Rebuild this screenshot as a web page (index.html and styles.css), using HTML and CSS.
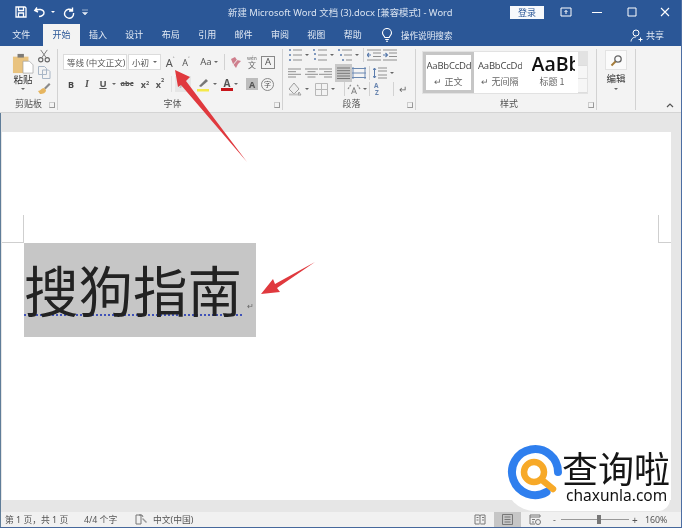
FILE: index.html
```html
<!DOCTYPE html>
<html lang="zh-CN">
<head>
<meta charset="utf-8">
<title>Word</title>
<link rel="stylesheet" href="styles.css">
</head>
<body>
<div class="window">
  <header class="titlebar">
    <div class="qat">
      <svg class="qi" width="14" height="14" viewBox="0 0 14 14"><path d="M2 2h9l1 1v9H2zM4.500 2v3.500h5V2M4.500 12V8h5v4" fill="none" stroke="#fff" stroke-width="1.300"/></svg>
      <svg class="qi" width="14" height="14" viewBox="0 0 14 14"><path d="M4 2.500 1.800 5.500 5 7M2.200 5.300C5 4 10.500 3.800 11 7.500 11.300 10 8.500 11.500 6 11.500" fill="none" stroke="#fff" stroke-width="1.400"/></svg>
      <i class="dot"></i>
      <svg class="qi redo" width="14" height="14" viewBox="0 0 14 14"><path d="M10.500 2.500v3.500H7M10.200 5.500A4.500 4.500 0 1 0 11.500 8" fill="none" stroke="#fff" stroke-width="1.400"/></svg>
      <svg class="qi more" width="8" height="8" viewBox="0 0 8 8"><path d="M1 2h6M1.500 4.500h5L4 7z" fill="#dfe7f3" stroke="#dfe7f3" stroke-width=".6"/></svg>
    </div>
    <div class="doctitle">新建 Microsoft Word 文档 (3).docx [兼容模式] - Word</div>
    <button class="login">登录</button>
    <div class="winctl">
      <svg width="12" height="10" viewBox="0 0 12 10"><path d="M1 1h10v8H1zM6 7V3.500M4.500 5 6 3.500 7.500 5" fill="none" stroke="#fff"/></svg>
      <svg class="wc2" width="10" height="10" viewBox="0 0 10 10"><path d="M0 5.500h10" stroke="#fff"/></svg>
      <svg class="wc3" width="10" height="10" viewBox="0 0 10 10"><path d="M1 1h8v8H1z" fill="none" stroke="#fff"/></svg>
      <svg class="wc4" width="10" height="10" viewBox="0 0 10 10"><path d="M1 1l8 8M9 1 1 9" stroke="#fff" stroke-width="1.100"/></svg>
    </div>
  </header>

  <nav class="tabs">
    <span class="tab first">文件</span>
    <span class="tab active">开始</span>
    <span class="tab">插入</span>
    <span class="tab">设计</span>
    <span class="tab">布局</span>
    <span class="tab">引用</span>
    <span class="tab">邮件</span>
    <span class="tab">审阅</span>
    <span class="tab">视图</span>
    <span class="tab">帮助</span>
    <svg class="bulb" width="12" height="14" viewBox="0 0 12 14"><path d="M3.800 9.500C3.500 8 1.500 7 1.500 5a4.500 4.500 0 0 1 9 0c0 2-2 3-2.300 4.500zM4.200 11.500h3.600M5 13.300h2" fill="none" stroke="#fff" stroke-width="1.100"/></svg>
    <span class="search">操作说明搜索</span>
    <span class="share">
      <svg width="13" height="13" viewBox="0 0 13 13"><circle cx="6" cy="4" r="3" fill="none" stroke="#fff"/><path d="M1 12.500C1.500 9 4 8 6 8M8.500 10.500h4M10.500 8.500v4" fill="none" stroke="#fff"/></svg>
      共享
    </span>
  </nav>

  <section class="ribbon">
    <div class="group g-clip">
      <div class="gbody clipbody">
        <div class="paste">
          <svg width="22" height="21" viewBox="0 0 24 23"><path d="M1 4h17v18H1z" fill="#e9c37f"/><path d="M6 1h7v4H6z" fill="#7d7a75"/><path d="M12 9h7l4 4v9H12z" fill="#fff" stroke="#9a9a9a" stroke-width=".7"/></svg>
          <span class="pastelabel">粘贴</span>
          <i class="caret"></i>
        </div>
        <div class="clipsmall">
          <svg width="14" height="14" viewBox="0 0 14 15"><circle cx="3.500" cy="11.500" r="2.300" fill="none" stroke="#666" stroke-width="1.200"/><circle cx="10.500" cy="11.500" r="2.300" fill="none" stroke="#666" stroke-width="1.200"/><path d="M4.500 9.500 10.500 1M9.500 9.500 3.500 1" stroke="#777"/></svg>
          <svg width="14" height="14" viewBox="0 0 14 14"><path d="M1.500 1.500h6l2 2v6h-8zM5.500 5h6l1.500 1.500v7h-7.500z" fill="#f3f3f3" stroke="#a8b6c6"/></svg>
          <svg width="14" height="14" viewBox="0 0 14 14"><path d="M7 7l5-5 1.500 1.500-5 5z" fill="#8a8a8a"/><path d="M1 10c3 0 3-3 6-3l2 2c0 3-3 4-6 4z" fill="#e6b55f"/></svg>
        </div>
      </div>
      <div class="glabel"><span></span><span>剪贴板</span><i class="launcher"></i></div>
    </div>

    <div class="group g-font">
      <div class="gbody rows">
        <div class="row">
          <span class="combo fontname">等线 (中文正文)<i class="caret"></i></span>
          <span class="combo fontsize">小初<i class="caret"></i></span>
          <span class="tool w16 big">A<sup>˄</sup></span>
          <span class="tool w16 mid">A<sup>˅</sup></span>
          <span class="tool aa">Aa<i class="caret"></i></span>
          <i class="vsep"></i>
          <svg class="tool w16" width="16" height="16" viewBox="0 0 16 16"><path d="M3 5l4-2 2 3 4 1-3 3-2 4-3-4z" fill="#cf7f8d"/><path d="M4 12l6-7" stroke="#eee"/></svg>
          <span class="tool w16 pinyin"><small>wén</small>文</span>
          <span class="tool w16 boxa">A</span>
        </div>
        <div class="row r2">
          <span class="tool w16 bold">B</span>
          <span class="tool w16 ital">I</span>
          <span class="tool w16 under">U</span><i class="caret c8"></i>
          <span class="tool w16 strike">abc</span>
          <span class="tool w16 xs">x<sub>2</sub></span>
          <span class="tool w14 xs">x<sup>2</sup></span>
          <i class="vsep v2"></i>
          <span class="tool w16 fade">A</span>
          <svg class="tool hl" width="16" height="16" viewBox="0 0 16 16"><path d="M3 10l7-7 2 2-7 6z" fill="#777"/><path d="M1 13h12v2.500H1z" fill="#f4e94a"/></svg><i class="caret c8"></i>
          <span class="tool w16 redA">A</span><i class="caret c8"></i>
          <span class="tool w16 shadeA">A</span>
          <span class="tool w16 circ">字</span>
        </div>
      </div>
      <div class="glabel"><span></span><span>字体</span><i class="launcher"></i></div>
    </div>

    <div class="group g-para">
      <div class="gbody rows para">
        <div class="row pr1">
          <svg class="pi" width="14" height="12" viewBox="0 0 14 12"><path d="M1 1h2M1 6h2M1 11h2" stroke="#345f9c" stroke-width="1.500"/><path d="M5 1h9M5 6h9M5 11h9" stroke="#777"/></svg><i class="caret cp"></i>
          <svg class="pi" width="14" height="12" viewBox="0 0 14 12"><path d="M1 0v2M1 5h2M1 10h2" stroke="#345f9c" stroke-width="1.500"/><path d="M5 1h9M5 6h9M5 11h9" stroke="#777"/></svg><i class="caret cp"></i>
          <svg class="pi" width="14" height="12" viewBox="0 0 14 12"><path d="M0 1h2M2 6h2M4 11h2" stroke="#345f9c" stroke-width="1.500"/><path d="M4 1h10M6 6h8M8 11h6" stroke="#777"/></svg><i class="caret cp"></i>
          <i class="vsep v3"></i>
          <svg class="pi" width="14" height="12" viewBox="0 0 14 12"><path d="M0 1h14M6 4h8M6 7.500h8M0 11h14" stroke="#777"/><path d="M0 6h4M2 4 0 6l2 2" fill="none" stroke="#345f9c" stroke-width="1.200"/></svg>
          <svg class="pi ind" width="14" height="12" viewBox="0 0 14 12"><path d="M0 1h14M6 4h8M6 7.500h8M0 11h14" stroke="#777"/><path d="M0 6h4M2.500 4l2 2-2 2" fill="none" stroke="#345f9c" stroke-width="1.200"/></svg>
        </div>
        <div class="row pr2">
          <svg class="pi" width="13" height="10" viewBox="0 0 13 10"><path d="M0 1h13M0 3.700h8M0 6.300h13M0 9h8" stroke="#777"/></svg>
          <svg class="pi a2" width="13" height="10" viewBox="0 0 13 10"><path d="M0 1h13M2.500 3.700h8M0 6.300h13M2.500 9h8" stroke="#777"/></svg>
          <svg class="pi a3" width="13" height="10" viewBox="0 0 13 10"><path d="M0 1h13M5 3.700h8M0 6.300h13M5 9h8" stroke="#777"/></svg>
          <span class="just"><svg width="13" height="12" viewBox="0 0 13 12"><path d="M0 1h13M0 3.700h13M0 6.300h13M0 9h13M0 11.500h13" stroke="#777"/></svg></span>
          <svg class="pi dist" width="14" height="12" viewBox="0 0 14 12"><path d="M0 1.500h14M0 6h14M0 10.500h14M1 0v12M13 0v12" stroke="#4a6fa3"/></svg>
          <i class="vsep v4"></i>
          <svg class="pi sp" width="14" height="12" viewBox="0 0 14 12"><path d="M5 1h9M5 4h9M5 8h9M5 11h9" stroke="#777"/><path d="M1.500 1v10M0 3l1.500-2L3 3M0 9l1.500 2L3 9" fill="none" stroke="#345f9c"/></svg><i class="caret cp"></i>
        </div>
        <div class="row pr3">
          <svg class="pi" width="14" height="14" viewBox="0 0 14 14"><path d="M6 1 1 7l5 5 5-5zM11 10l2 3h-3z" fill="#eee" stroke="#888"/><path d="M1 12.500h9" stroke="#bbb" stroke-width="2"/></svg><i class="caret cp c1"></i>
          <svg class="pi" width="13" height="13" viewBox="0 0 13 13"><path d="M.5.500h12v12H.5zM6.500 1v11M1 6.500h11" fill="none" stroke="#aaa"/></svg><i class="caret cp c2"></i>
          <i class="vsep v5"></i>
          <svg class="pi cn" width="14" height="12" viewBox="0 0 14 12"><path d="M4.500 11 7 4.500 9.500 11M5.500 9h3" fill="none" stroke="#666"/><path d="M1 6 4 1.500M13 6 10 1.500" stroke="#777" stroke-width="1.300" stroke-dasharray="2 1"/></svg><i class="caret cp c3"></i>
          <i class="vsep v6"></i>
          <span class="sort"><b>A</b><b class="z">Z</b></span>
          <i class="vsep v7"></i>
          <span class="mark">↵</span>
        </div>
      </div>
      <div class="glabel"><span></span><span>段落</span><i class="launcher"></i></div>
    </div>

    <div class="group g-style">
      <div class="gbody">
        <div class="gallery">
          <div class="style sel"><span class="sample">AaBbCcDd</span><span class="sname">↵ 正文</span></div>
          <div class="style"><span class="sample">AaBbCcDd</span><span class="sname">↵ 无间隔</span></div>
          <div class="style h1"><span class="sample">AaBb</span><span class="sname">标题 1</span></div>
          <div class="gscroll"><i></i><i></i><i></i></div>
        </div>
      </div>
      <div class="glabel"><span></span><span>样式</span><i class="launcher"></i></div>
    </div>

    <div class="group g-edit">
      <span class="editbtn"><svg width="13" height="13" viewBox="0 0 13 13"><circle cx="8" cy="5" r="3.200" fill="none" stroke="#666" stroke-width="1.300"/><path d="M5.500 7.500 1.500 11.500" stroke="#a57c3a" stroke-width="2"/></svg></span>
      <span class="editlabel">编辑</span>
      <i class="caret"></i>
    </div>

    <div class="collapse"><svg width="8" height="5" viewBox="0 0 8 5"><path d="M1 4l3-3 3 3" fill="none" stroke="#555" stroke-width="1.200"/></svg></div>
  </section>

  <main class="workspace">
    <div class="page">
      <div class="marks"><i class="mark-l"></i><i class="mark-r"></i></div>
      <div class="selection"><span class="doc">搜狗指南</span><span class="para-mark">↵</span></div>
    </div>
  </main>

  <footer class="status">
    <span class="s1">第 1 页，共 1 页</span>
    <span class="s2">4/4 个字</span>
    <svg class="s3" width="13" height="11" viewBox="0 0 13 11"><path d="M1 1h5v9H1zM4 1h3l1 2" fill="none" stroke="#777"/><path d="M8 4l4 4-1 1-4-4z" fill="#999"/></svg>
    <span class="s4">中文(中国)</span>
    <span class="sright">
      <svg width="12" height="11" viewBox="0 0 12 11"><path d="M1 1h4.500l.5 1 .5-1H11v9H6.500L6 9.500 5.500 10H1zM6 2v7M2.500 3.500h2M2.500 6h2M8 3.500h2M8 6h2" fill="none" stroke="#777"/></svg>
      <span class="viewon"><svg width="11" height="11" viewBox="0 0 11 11"><path d="M.5.500h10v10H.5zM2.500 3h6M2.500 5.500h6M2.500 8h6" fill="none" stroke="#777"/></svg></span>
      <svg class="webv" width="12" height="11" viewBox="0 0 12 11"><path d="M1 1h10v2H1zM1 3v7h5M3 5.500h3M3 8h2" fill="none" stroke="#777"/><circle cx="9" cy="8" r="2.500" fill="none" stroke="#777"/></svg>
      <span class="zminus">-</span>
      <span class="slider"><i></i></span>
      <span class="zplus">+</span>
      <span class="zoomv">160%</span>
    </span>
  </footer>

  <svg class="arrows" width="682" height="528" viewBox="0 0 682 528">
    <path d="M175 70 190 77 186 81 247 162 181 85 178 87z" fill="#e0393e"/>
    <path d="M261 294 273 279 275 284 315 262 277 288 280 292z" fill="#e0393e"/>
  </svg>

  <div class="watermark">
    <svg class="wm-logo" width="64" height="62" viewBox="0 0 64 62">
      <path d="M53 32A23 23 0 1 0 41.500 52" fill="none" stroke="#2f7fee" stroke-width="8" stroke-linecap="round"/>
      <circle cx="29" cy="32" r="10" fill="none" stroke="#f7a928" stroke-width="6.500"/>
      <path d="M37 40 48 49" stroke="#f7a928" stroke-width="6.500" stroke-linecap="round"/>
    </svg>
    <div class="wm-text">
      <span class="wm-cn">查询啦</span>
      <span class="wm-en">chaxunla.com</span>
    </div>
  </div>
</div>
</body>
</html>
```
FILE: styles.css
```css
*{box-sizing:border-box;margin:0;padding:0}
html,body{width:682px;height:528px;overflow:hidden;background:#fff}
body{font-family:"Noto Sans","Noto Sans CJK SC",sans-serif;color:#444}
i{font-style:normal;display:block}
svg{display:block;flex:none}
.window{position:relative;width:682px;height:528px;display:flex;flex-direction:column;filter:blur(.4px);border-right:1px solid #4d6ea3;border-bottom:1px solid #46689c}

.titlebar{height:24px;background:#2b5797;display:flex;align-items:center;color:#e8eef7;flex:none}
.qat{width:228px;display:flex;align-items:center;padding-left:14px}
.qat .qi+.qi{margin-left:5px}
.dot{width:0;height:0;border:2px solid transparent;border-top:2px solid #fff;margin:2px 0 0 4px}
.qat .redo{margin-left:7px}
.qat .more{margin-left:12px}
.doctitle{width:282px;font-size:9.400px;white-space:nowrap;color:#d8e2f0}
.login{width:34px;height:13px;background:#f7f9fc;border:0;font:9px "Noto Sans CJK SC",sans-serif;color:#2b5797;line-height:13px}
.winctl{display:flex;align-items:center;margin-left:16px}
.wc2{margin-left:20px}
.wc3{margin-left:25px}
.wc4{margin-left:23px}

.tabs{height:22px;background:#2b5797;display:flex;align-items:center;padding-left:3px;color:#e4ebf5;font-size:9px;flex:none}
.tab{width:36.400px;height:22px;line-height:22px;text-align:center}
.tab.first{margin-right:4px}
.tab.active{background:#f3f3f3;color:#2b5797}
.bulb{margin-left:10px}
.search{margin-left:8px;width:52px;white-space:nowrap;font-size:8.600px}
.share{margin-left:auto;margin-right:17px;display:flex;align-items:center;gap:3px}

.ribbon{height:67px;background:#f3f3f3;border-bottom:1px solid #d4d4d4;display:flex;padding:3px 0;flex:none;font-size:9px}
.group{height:61px;border-right:1px solid #d2d2d2;display:flex;flex-direction:column;flex:none}
.gbody{flex:1;min-height:0}
.glabel{height:14px;padding-top:2px;line-height:12px;display:grid;grid-template-columns:1fr auto 1fr;align-items:center;font-size:9px;color:#555}
.launcher{justify-self:end;width:6px;height:6px;border:1px solid #999;border-top-color:#ccc;border-left-color:#ccc;margin-right:2px;margin-top:2px}
.caret{width:0;height:0;border:2px solid transparent;border-top:2.500px solid #666;margin-top:2px;flex:none}

.g-clip{width:58px}
.clipbody{display:flex;padding:0 0 0 10px}
.paste{width:26px;display:flex;flex-direction:column;align-items:center;padding-top:4px}
.pastelabel{font-size:9.500px;line-height:12px;color:#333}
.clipsmall{margin-left:1px;display:flex;flex-direction:column;gap:2px}

.g-font{width:225px;padding-left:5px}
.rows{display:flex;flex-direction:column;padding-top:5px}
.row{display:flex;align-items:center;height:16px}
.r2{margin-top:6px}
.combo{height:16px;background:#fff;border:1px solid #dcdcdc;display:flex;align-items:center;justify-content:space-between;font-size:8.500px;padding:0 3px;overflow:hidden;white-space:nowrap;color:#555}
.fontname{width:64px;flex:none}
.fontsize{width:33px;margin-left:1px;flex:none}
.fontname .caret,.fontsize .caret{margin-left:1px}
.tool{display:flex;align-items:center;justify-content:center;height:16px;flex:none;font-family:"Noto Sans",sans-serif;font-size:10px;color:#555;line-height:1}
.w16{width:16px}
.w14{width:14px}
.big{font-size:11px;margin-left:1px}
.mid{font-size:9px}
.tool sup{font-size:6px;line-height:1;margin-top:-6px;vertical-align:top}
.aa{width:24px;margin-left:3px;font-size:9.500px;gap:2px}
.vsep{width:1px;height:16px;background:#d2d2d2;flex:none;margin:0 3px}
.pinyin{flex-direction:column;font-family:"Noto Sans CJK SC",sans-serif;font-size:8px;color:#666}
.pinyin small{font-size:5px;line-height:6px}
.boxa{border:1px solid #888;width:14px;height:13px;margin-left:1px;font-size:9.500px}
.bold{font-weight:700;font-size:9px;color:#444}
.ital{font-style:italic;font-family:"Liberation Serif",serif;font-size:10px;font-weight:700}
.under{text-decoration:underline;font-weight:700;font-size:9.500px}
.c8{margin:2px 0 0 1px;width:4px}
.strike{font-size:7.500px;text-decoration:line-through;margin-left:3px;font-weight:700}
.xs{font-size:9px;font-weight:700}
.xs sub,.xs sup{font-size:5.500px;line-height:1}
.tool.w16.xs{margin-left:2px}
.v2{margin:0 3px 0 4px;background:#e0e0e0}
.fade{color:#c0c0c0;background:#e6e6e6;font-weight:700}
.hl{width:16px;margin-left:5px}
.redA{margin-left:4px;border-bottom:3px solid #c8161c;height:14px;font-size:10px;width:12px;font-weight:700}
.shadeA{width:12px;height:12px;background:#bdbdbd;margin-left:8px;font-size:9px;font-weight:700}
.circ{width:13px;height:13px;border:1px solid #888;border-radius:50%;font-family:"Noto Sans CJK SC",sans-serif;font-size:7px;margin-left:3px}

.g-para{width:133px;padding-left:5px}
.rows.para{padding-top:0}
.pi{opacity:.8}
.pr1{height:12px}
.pr2{height:18px;margin-top:3px}
.pr3{height:14px;margin-top:0}
.cp{margin:2px 4px 0 3px;width:4px}
.pr2 .a2{margin-left:3.500px}
.pr2 .a3{margin-left:1px}
.v3{margin:0 3px 0 0;height:14px}
.ind{margin-left:2px}
.just{width:17px;height:18px;background:#c8c8c8;display:flex;align-items:center;justify-content:center;margin-left:3px;flex:none}
.v4{height:14px;margin:0 3px}
.c1{margin-right:6px}
.c2{margin-right:9px}
.v5{height:14px;margin:0 2px 0 0}
.cn{width:14px}
.c3{margin:2px 1px 0 2px}
.v6{height:14px;margin:0 4px 0 1px}
.sort{width:12px;display:flex;flex-direction:column;font-size:6.500px;line-height:7px;color:#6a86b0;flex:none}
.sort b{display:block}
.sort .z{margin-left:1px}
.v7{height:14px;margin:0 5px 0 7px}
.mark{font-size:10px;color:#666}

.g-style{width:181px;padding-left:6px}
.gallery{width:166px;height:43px;margin-top:2px;background:#fff;display:flex;border:1px solid #e2e2e2}
.style{width:52px;height:41px;display:flex;flex-direction:column;align-items:center;overflow:hidden;padding-top:7px;flex:none}
.style.sel{width:51px;border:3px solid #c6c6c6;padding-top:4px}
.sample{font-size:9.500px;line-height:14px;white-space:nowrap;width:44px;overflow:hidden;color:#444;font-family:"Open Sans","Noto Sans",sans-serif;letter-spacing:-.2px}
.sname{font-family:"Noto Sans CJK SC",sans-serif;font-size:9px;line-height:14px;margin-top:2px;color:#666}
.h1 .sample{font-size:19.500px;line-height:22px;font-weight:600;color:#111;letter-spacing:0;width:43px;height:22px;margin-top:-6px;margin-left:2px}
.h1 .sname{margin-top:0}
.gscroll{width:10px;margin-left:auto;display:flex;flex-direction:column;background:#eee}
.gscroll i{flex:1;border-bottom:1px solid #ddd}
.gscroll i:first-child{background:#e2e2e2}
.gscroll i:nth-child(n+2){background:#f6f6f6}

.g-edit{width:39px;align-items:center;padding-top:1px}
.editbtn{width:22px;height:20px;background:#fbfbfb;border:1px solid #e3e3e3;display:flex;align-items:center;justify-content:center}
.editlabel{font-size:9.500px;line-height:12px;margin-top:3px;color:#333}
.g-edit .caret{margin-top:3px}
.collapse{margin-left:auto;margin-right:7px;align-self:flex-end;padding-bottom:1px}

.workspace{flex:1;min-height:0;background:#e6e6e6;padding:19px 10px 0 1px;border-left:1px solid #5f7d99}
.page{height:368px;background:#fff;display:flex;flex-direction:column}
.marks{height:28px;margin-top:83px;display:flex;justify-content:space-between;flex:none}
.mark-l{width:22px;border-right:1px solid #cfcfcf;border-bottom:1px solid #cfcfcf;height:28px}
.mark-r{width:13px;border-left:1px solid #cfcfcf;border-bottom:1px solid #cfcfcf;height:28px}
.selection{width:232px;height:94px;margin-left:22px;background:#c6c6c6;display:flex;align-items:flex-start;padding-top:8px;flex:none;font-family:"Noto Sans CJK SC",sans-serif}
.doc{font-size:54.500px;line-height:76px;color:#222;font-weight:400;white-space:nowrap;text-decoration:underline dotted #3f52b8 2px;text-underline-offset:2px}
.para-mark{font-size:8px;color:#666;margin:50px 0 0 5px;line-height:10px}

.status{height:15px;background:#f1f1f1;display:flex;align-items:center;font-size:8.800px;color:#555;flex:none;white-space:nowrap;padding-left:4px;border-left:1px solid #5f7d99}
.s1{width:79px}
.s2{width:51px}
.s3{flex:none}
.s4{margin-left:5px}
.sright{margin-left:auto;display:flex;align-items:center;margin-right:12px}
.viewon{width:27px;height:15px;background:#c6c6c6;margin-left:8px;display:flex;align-items:center;justify-content:center}
.webv{margin-left:8px}
.zminus{margin-left:12px;width:8px}
.slider{position:relative;width:68px;height:1px;background:#999}
.slider i{position:absolute;left:36px;top:-4px;width:4px;height:9px;background:#777}
.zplus{margin-left:3px;width:12px;font-size:10px}
.zoomv{width:24px;margin-left:1px}

.arrows{position:absolute;left:0;top:0;pointer-events:none}
.watermark{position:absolute;left:505px;top:440px;width:165px;height:71px;background:#fff;border-radius:0 0 12px 30px;display:flex;color:#222}
.wm-text{display:flex;flex-direction:column;margin-left:-7px}
.wm-cn{font-family:"Noto Sans CJK SC",sans-serif;font-size:36px;line-height:44px;margin-top:5px;white-space:nowrap;color:#151515}
.wm-en{font-family:"Noto Sans",sans-serif;font-size:15.500px;line-height:18px;margin:-3px 0 0 4px;color:#111}
```
